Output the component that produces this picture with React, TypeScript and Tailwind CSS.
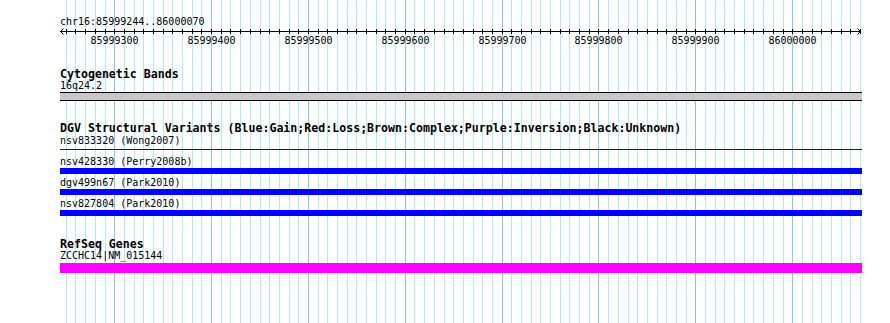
const START = 85999244;
const END = 86000070;
const LEFT = 60;
const SPAN = 800;

const toX = (bp: number) => Math.round(LEFT + ((bp - START) * SPAN) / (END - START));

const ticks: number[] = [];
for (let bp = Math.ceil(START / 10) * 10; bp <= END; bp += 10) ticks.push(bp);

function GridAndRuler() {
  return (
    <svg
      className="absolute inset-0"
      width={890}
      height={323}
      shapeRendering="crispEdges"
    >
      {ticks.map((bp) => {
        const x = toX(bp) + 0.5;
        const major = bp % 100 === 0;
        return (
          <line
            key={"g" + bp}
            x1={x}
            x2={x}
            y1={0}
            y2={323}
            stroke={major ? "#88c8e8" : "#aeeef0"}
            strokeWidth={1}
          />
        );
      })}
      {/* axis */}
      <line x1={60} x2={861} y1={31.5} y2={31.5} stroke="#000" />
      <path d="M60.5 31.5 L63.5 28.5 M60.5 31.5 L63.5 34.5" stroke="#000" fill="none" shapeRendering="auto" />
      <path d="M860.5 31.5 L857.5 28.5 M860.5 31.5 L857.5 34.5" stroke="#000" fill="none" shapeRendering="auto" />
      {ticks.map((bp) => {
        const x = toX(bp) + 0.5;
        return <line key={"t" + bp} x1={x} x2={x} y1={29} y2={34} stroke="#000" />;
      })}
      {ticks
        .filter((bp) => bp % 100 === 0)
        .map((bp) => (
          <text
            key={"l" + bp}
            x={toX(bp) + 0.5}
            y={44}
            textAnchor="middle"
            fontFamily="'DejaVu Sans Mono', monospace"
            fontSize={10}
            fill="#000"
          >
            {bp}
          </text>
        ))}
    </svg>
  );
}

function Title({ children, className = "" }: { children: React.ReactNode; className?: string }) {
  return (
    <div className={"text-[11.6px] font-bold leading-[11px] whitespace-nowrap " + className}>
      {children}
    </div>
  );
}

function Label({ children, className = "" }: { children: React.ReactNode; className?: string }) {
  return (
    <div className={"text-[10px] leading-[13px] whitespace-nowrap " + className}>{children}</div>
  );
}

const variants = [
  { name: "nsv428330 (Perry2008b)" },
  { name: "dgv499n67 (Park2010)" },
  { name: "nsv827804 (Park2010)" },
];

export default function App() {
  return (
    <div className="relative w-[890px] h-[323px] overflow-hidden bg-white text-black font-['DejaVu_Sans_Mono',monospace]">
      <GridAndRuler />
      <div className="relative pl-[60px] w-[862px]">
        <Label className="pt-[15px]">chr16:85999244..86000070</Label>

        {/* Cytogenetic Bands */}
        <Title className="mt-[41px]">Cytogenetic Bands</Title>
        <div className="text-[10px] leading-[11px]">16q24.2</div>
        <div className="mt-[1px] h-[9px] w-[802px] border-y border-black bg-[#c8c8c8]" />

        {/* DGV */}
        <Title className="mt-[22px]">
          DGV Structural Variants (Blue:Gain;Red:Loss;Brown:Complex;Purple:Inversion;Black:Unknown)
        </Title>
        <Label>nsv833320 (Wong2007)</Label>
        <div className="mt-[2px] h-[1px] w-[802px] bg-[#0000ff]" />
        <div className="mt-[5px] flex flex-col gap-[2px]">
          {variants.map((v) => (
            <div key={v.name}>
              <Label>{v.name}</Label>
              <div className="h-[6px] w-[802px] bg-[#0000ff]" />
            </div>
          ))}
        </div>

        {/* RefSeq */}
        <Title className="mt-[23px]">RefSeq Genes</Title>
        <div className="text-[10px] leading-[11px]">ZCCHC14|NM_015144</div>
        <div className="mt-[2px] h-[10px] w-[802px] bg-[#ff00ff]" />
      </div>
    </div>
  );
}
